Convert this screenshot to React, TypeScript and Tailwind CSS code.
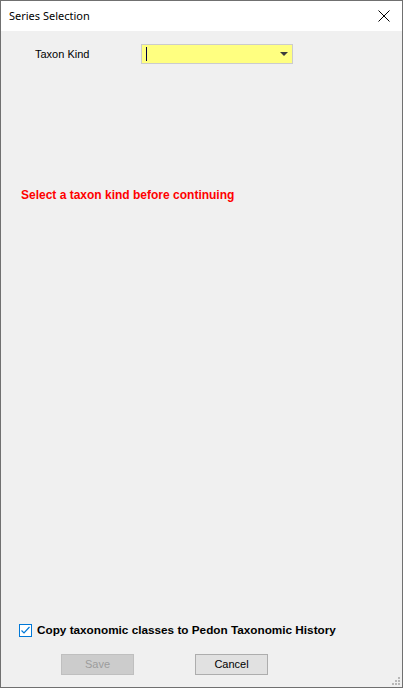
export default function App() {
  return (
    <div className="flex h-[688px] w-[403px] flex-col border border-[#707070] bg-[#f0f0f0] font-['Liberation_Sans',Arial,sans-serif] text-[11px] text-black">
      <TitleBar />

      <div className="flex flex-1 flex-col">
        <div className="mt-[13px] flex h-[20px] items-center">
          <span className="ml-[34px] w-[106px]">Taxon Kind</span>
          <ComboBox />
        </div>

        <p className="ml-[20px] mt-[122px] text-[12px] font-bold text-[#ff0000]">
          Select a taxon kind before continuing
        </p>

        <div className="flex-1" />

        <label className="ml-[18px] flex items-center gap-[5px]">
          <CheckBox />
          <span className="text-[11.75px] font-bold">
            Copy taxonomic classes to Pedon Taxonomic History
          </span>
        </label>

        <div className="relative mt-[15px] flex h-[33px] items-start">
          <button
            type="button"
            disabled
            className="ml-[60px] h-[21px] w-[73px] border border-[#bfbfbf] bg-[#cccccc] text-[#9c9c9c]"
          >
            Save
          </button>
          <button
            type="button"
            className="ml-[61px] h-[21px] w-[73px] border border-[#adadad] bg-[#e1e1e1]"
          >
            Cancel
          </button>
          <SizeGrip />
        </div>
      </div>
    </div>
  );
}

function TitleBar() {
  return (
    <div className="flex h-[30px] items-center justify-between bg-white">
      <span className="ml-[8px] font-['Noto_Sans',sans-serif] text-[11px]">
        Series Selection
      </span>
      <svg
        width="12"
        height="12"
        viewBox="0 0 12 12"
        className="mr-[12px]"
        fill="none"
        stroke="#000"
        strokeWidth="1"
        aria-hidden
      >
        <path d="M0.5 0.5 L11.5 11.5 M11.5 0.5 L0.5 11.5" />
      </svg>
    </div>
  );
}

function ComboBox() {
  return (
    <div className="relative flex h-[20px] w-[152px] items-center border border-[#cccccc] bg-[#ffff80]">
      <span className="ml-[4px] h-[14px] w-px bg-[#000040]" />
      <svg
        width="8"
        height="4"
        viewBox="0 0 8 4"
        className="absolute right-[4px] top-[7px]"
        aria-hidden
      >
        <polygon points="0 0 8 0 4 4" fill="#3c3c3c" />
      </svg>
    </div>
  );
}

function CheckBox() {
  return (
    <span className="flex h-[13px] w-[13px] items-center justify-center border border-[#0078d7] bg-white">
      <svg width="11" height="11" viewBox="0 0 11 11" fill="none" aria-hidden>
        <polyline
          points="1.5 5.5 4 8 9.5 2"
          stroke="#0078d7"
          strokeWidth="1.2"
        />
      </svg>
    </span>
  );
}

function SizeGrip() {
  const dots = [
    [6, 0],
    [6, 3],
    [3, 3],
    [6, 6],
    [3, 6],
    [0, 6],
  ];
  return (
    <svg
      width="8"
      height="8"
      viewBox="0 0 8 8"
      className="absolute bottom-[2px] right-[2px]"
      aria-hidden
    >
      {dots.map(([x, y]) => (
        <rect key={`${x}-${y}`} x={x} y={y} width="2" height="2" fill="#b8b8b8" />
      ))}
    </svg>
  );
}
